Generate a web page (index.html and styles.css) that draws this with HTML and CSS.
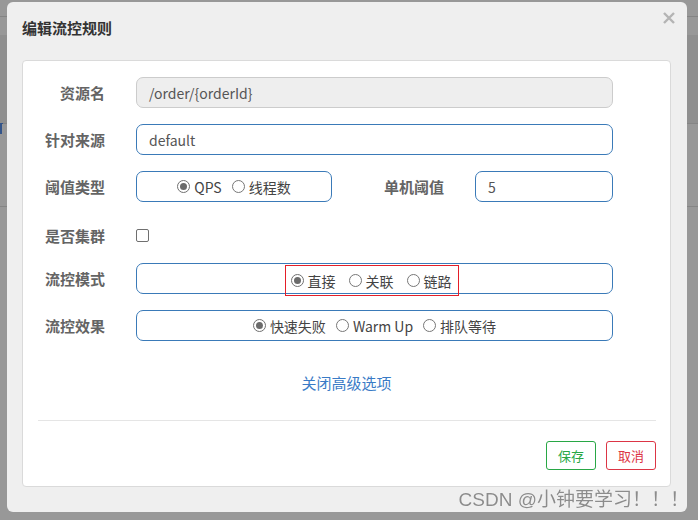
FILE: index.html
```html
<!DOCTYPE html>
<html lang="zh-CN">
<head>
<meta charset="utf-8">
<title>编辑流控规则</title>
<link rel="stylesheet" href="styles.css">
</head>
<body>
<div class="page">
  <div class="page-top"></div>
  <div class="page-band"><span class="page-mark"></span></div>
  <div class="page-rest"></div>
</div>

<div class="modal">
  <div class="modal-header">
    <h4 class="modal-title">编辑流控规则</h4>
    <span class="close">
      <svg width="12" height="12" viewBox="0 0 12 12"><path d="M1 1 L11 11 M11 1 L1 11" stroke="#b4b4b4" stroke-width="2.4" fill="none"/></svg>
    </span>
  </div>

  <div class="card">
    <div class="form">
      <div class="row">
        <label class="label">资源名</label>
        <div class="field disabled">/order/{orderId}</div>
      </div>
      <div class="row">
        <label class="label">针对来源</label>
        <div class="field">default</div>
      </div>
      <div class="row">
        <label class="label">阈值类型</label>
        <div class="field radios field-small">
          <span class="opt"><span class="radio checked"></span>QPS</span>
          <span class="opt"><span class="radio"></span>线程数</span>
        </div>
        <label class="label label-wide">单机阈值</label>
        <div class="field">5</div>
      </div>
      <div class="row row-check">
        <label class="label">是否集群</label>
        <span class="checkbox"></span>
      </div>
      <div class="row row-mode">
        <label class="label">流控模式</label>
        <div class="field radios">
          <div class="mode-group">
            <span class="opt"><span class="radio checked"></span>直接</span>
            <span class="opt"><span class="radio"></span>关联</span>
            <span class="opt"><span class="radio"></span>链路</span>
          </div>
        </div>
      </div>
      <div class="row">
        <label class="label">流控效果</label>
        <div class="field radios">
          <span class="opt"><span class="radio checked"></span>快速失败</span>
          <span class="opt"><span class="radio"></span>Warm Up</span>
          <span class="opt"><span class="radio"></span>排队等待</span>
        </div>
      </div>
    </div>

    <div class="toggle"><a class="link">关闭高级选项</a></div>

    <div class="footer">
      <button class="btn btn-save">保存</button>
      <button class="btn btn-cancel">取消</button>
    </div>
  </div>
</div>

<div class="watermark">CSDN @小钟要学习！！！</div>
</body>
</html>
```

FILE: styles.css
```css
* { box-sizing: border-box; }

html, body {
  margin: 0;
  padding: 0;
  width: 698px;
  height: 520px;
  overflow: hidden;
}

body {
  background: #989898;
  font-family: "Noto Sans CJK SC", "Noto Sans", sans-serif;
  color: #555;
}

/* underlying page (behind the backdrop) */
.page-top {
  height: 17px;
  border-bottom: 1px solid #848484;
}
.page-band {
  margin-top: 18px;
  height: 78px;
  background: #8f8f8f;
  border-bottom: 1px solid #858585;
  padding-top: 88px;
}
.page-mark {
  display: block;
  width: 3px;
  height: 11px;
  border-left: 2px solid #34558a;
  border-top: 1px solid #34558a;
}
.page-rest {
  margin-top: 82px;
  border-top: 1px solid #858585;
}

/* modal */
.modal {
  position: fixed;
  left: 7px;
  top: 2px;
  width: 680px;
  height: 510px;
  background: #efefef;
  border-radius: 6px;
}

.modal-header {
  height: 58px;
  padding: 16px 0 0 15px;
}
.modal-title {
  margin: 0;
  font-size: 15px;
  line-height: 20px;
  font-weight: bold;
  color: #333;
}
.close {
  position: absolute;
  top: 10px;
  right: 12px;
  width: 12px;
  height: 12px;
  line-height: 0;
}

.card {
  margin: 0 16px 0 15px;
  background: #fff;
  border: 1px solid #dadada;
  border-radius: 4px;
  padding-top: 16px;
}

.form {
  padding-right: 57px;
  padding-bottom: 1px;
}

.row {
  display: flex;
  align-items: center;
  height: 31px;
  margin-bottom: 16px;
}
.row-check {
  margin-top: 18px;
  margin-bottom: 12px;
}

.label {
  width: 82px;
  margin-right: 31px;
  flex: none;
  text-align: right;
  font-size: 15px;
  font-weight: bold;
  color: #646464;
  line-height: 20px;
}
.label-wide {
  width: 112px;
}

.field {
  flex: 1;
  height: 31px;
  border: 1px solid #3a7ab8;
  border-radius: 7px;
  padding: 0 12px;
  display: flex;
  align-items: center;
  font-size: 14px;
  color: #555;
}
.field.disabled {
  background: #eeeeee;
  border-color: #cccccc;
}
.field-small {
  flex: none;
  width: 196px;
}

.radios {
  justify-content: center;
  padding: 0;
  color: #444;
}
.opt {
  display: inline-flex;
  align-items: center;
  font-size: 14px;
  line-height: 18px;
  margin: 0 5px;
}
.radio {
  width: 13px;
  height: 13px;
  border: 1px solid #777;
  border-radius: 50%;
  margin-right: 4px;
  background: #fff;
  position: relative;
  flex: none;
}
.radio.checked {
  border-color: #707070;
}
.radio.checked::after {
  content: "";
  position: absolute;
  left: 2px;
  top: 2px;
  width: 7px;
  height: 7px;
  border-radius: 50%;
  background: #6b6b6b;
}

.mode-group {
  display: flex;
  align-items: center;
  justify-content: space-between;
  width: 174px;
  height: 31px;
  margin-top: 4px;
  margin-right: 6px;
  padding: 0 7px 0 6px;
  border: 0;
  box-shadow: inset 0 0 0 1px rgb(228, 30, 40);
}
.mode-group .opt {
  margin: 0;
}

.checkbox {
  width: 13px;
  height: 13px;
  border: 1px solid #6f6f6f;
  border-radius: 2px;
  background: #fff;
}

.toggle {
  text-align: center;
  margin-top: 14px;
  line-height: 20px;
}
.link {
  font-size: 15px;
  color: #3a7bc6;
}

.footer {
  margin: 27px 14px 0 15px;
  border-top: 1px solid #e5e5e5;
  padding: 20px 0 16px;
  display: flex;
  justify-content: flex-end;
  gap: 10px;
}
.btn {
  width: 50px;
  height: 29px;
  background: #fff;
  border-radius: 3px;
  font-family: "Noto Sans CJK SC", sans-serif;
  font-size: 13px;
  padding: 0;
}
.btn-save {
  border: 1px solid #28a745;
  color: #28a745;
}
.btn-cancel {
  border: 1px solid #dc3545;
  color: #dc3545;
}

.watermark {
  position: fixed;
  right: 9px;
  top: 489px;
  font-size: 19px;
  line-height: 22px;
  color: #8c8c8c;
  font-family: "Liberation Sans", "Noto Sans CJK SC", sans-serif;
  text-shadow: 0 0 1px #fff;
}
```
